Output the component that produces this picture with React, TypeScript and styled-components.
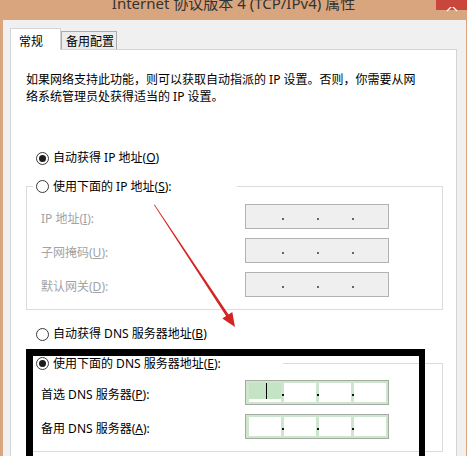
import React from "react";
import styled, { createGlobalStyle } from "styled-components";

const GlobalStyle = createGlobalStyle`
  html, body {
    margin: 0;
    padding: 0;
    background: #d9a57e;
    overflow: hidden;
  }
  body {
    font-family: "Segoe UI", "Noto Sans", "Noto Sans CJK SC", sans-serif;
  }
`;

const Window = styled.div`
  position: relative;
  width: 467px;
  height: 456px;
  background: #d9a57e;
  display: flex;
  flex-direction: column;
  overflow: hidden;
`;

const TitleBar = styled.div`
  height: 20px;
  flex: none;
  display: grid;
  grid-template-columns: 1fr auto 1fr;
  align-items: start;
  overflow: hidden;
`;

const Title = styled.div`
  grid-column: 2;
  font-size: 15px;
  line-height: 20px;
  margin-top: -7px;
  color: #333;
  white-space: nowrap;
`;

const CloseButton = styled.div`
  grid-column: 3;
  justify-self: end;
  width: 31px;
  height: 10px;
  background: #c9463d;
`;

const Body = styled.div`
  flex: 1;
  min-height: 0;
  margin: 0 1px 0 3px;
  padding: 8px 9px 0 7px;
  background: #f0f0f0;
  display: flex;
  flex-direction: column;
`;

const Tabs = styled.div`
  display: flex;
  align-items: flex-end;
  height: 21px;
  flex: none;
  position: relative;
  z-index: 1;
`;

const Tab = styled.div<{ $active?: boolean }>`
  box-sizing: border-box;
  font-size: 12px;
  line-height: 16px;
  color: #000;
  white-space: nowrap;
  border: 1px solid ${(p) => (p.$active ? "#d4d4d4" : "#acacac")};
  border-bottom: none;
  background: ${(p) => (p.$active ? "#fff" : "#ececec")};
  height: ${(p) => (p.$active ? "22px" : "18px")};
  margin-bottom: ${(p) => (p.$active ? "-1px" : "0")};
  padding: ${(p) => (p.$active ? "5px 0 0 8px" : "2px 0 0 4px")};
  width: ${(p) => (p.$active ? "51px" : "56px")};
`;

const Panel = styled.div`
  flex: 1;
  background: #fff;
  border: 1px solid #d4d4d4;
  border-bottom: none;
  padding: 21px 13px 0 15px;
  font-size: 12px;
  color: #000;
`;

const Intro = styled.p`
  margin: 0;
  line-height: 17px;
  white-space: nowrap;
`;

const RadioRow = styled.label<{ $mt: number }>`
  display: flex;
  align-items: center;
  gap: 4px;
  height: 18px;
  margin: ${(p) => p.$mt}px 0 0 10px;
  line-height: 18px;
  white-space: nowrap;
`;

const RadioCircle = styled.span<{ $checked?: boolean }>`
  box-sizing: border-box;
  width: 13px;
  height: 13px;
  flex: none;
  border-radius: 50%;
  border: 1px solid #3a3a3a;
  background: #fff;
  display: flex;
  align-items: center;
  justify-content: center;

  &::after {
    content: "";
    width: 7px;
    height: 7px;
    border-radius: 50%;
    background: #1c1c1c;
    display: ${(p) => (p.$checked ? "block" : "none")};
  }
`;

const Group = styled.div<{ $mt: number }>`
  border: 1px solid #dcdcdc;
  margin-top: ${(p) => p.$mt}px;
  padding: 0 0 12px 0;
`;

const Legend = styled.label<{ $width: number }>`
  display: flex;
  align-items: center;
  gap: 4px;
  box-sizing: border-box;
  width: ${(p) => p.$width}px;
  height: 18px;
  margin: -10px 0 0 6px;
  padding-left: 3px;
  background: #fff;
  white-space: nowrap;
`;

const Fields = styled.div<{ $mt: number }>`
  display: flex;
  flex-direction: column;
  gap: 9px;
  margin-top: ${(p) => p.$mt}px;
  padding-left: 14px;
`;

const FieldRow = styled.div`
  display: flex;
  align-items: center;
  height: 25px;
`;

const FieldLabel = styled.span<{ $disabled?: boolean }>`
  width: 204px;
  flex: none;
  padding-top: 2px;
  color: ${(p) => (p.$disabled ? "#a3a3a3" : "#000")};
  white-space: nowrap;
`;

const IpBox = styled.div<{ $active?: boolean }>`
  box-sizing: border-box;
  width: 144px;
  height: 25px;
  display: flex;
  border: 1px solid ${(p) => (p.$active ? "#a3aba3" : "#b0b3b0")};
  padding: 2px 2px 2px 3px;
  background: ${(p) => (p.$active ? "#cde6cd" : "#eeefee")};
`;

const Segment = styled.div<{ $active?: boolean; $focused?: boolean }>`
  flex: 1;
  display: flex;
  align-items: flex-start;
  background: ${(p) => (p.$focused ? "#c5e3c5" : p.$active ? "#fff" : "#eeefee")};
  border-bottom: ${(p) => (p.$focused ? "3px solid #fff" : "none")};
`;

const Caret = styled.span`
  width: 1px;
  height: 16px;
  margin: 0 0 0 17px;
  background: #000;
`;

const Dot = styled.span<{ $active?: boolean }>`
  width: 3px;
  flex: none;
  display: flex;
  align-items: flex-end;
  justify-content: center;
  padding-bottom: 6px;

  &::after {
    content: "";
    width: 2px;
    height: 2px;
    background: ${(p) => (p.$active ? "#111" : "#666")};
  }
`;

const Highlight = styled.div`
  position: absolute;
  left: 26px;
  top: 349px;
  width: 399px;
  height: 130px;
  box-sizing: border-box;
  border-style: solid;
  border-color: #000;
  border-width: 7px 6px 0 7px;
  pointer-events: none;
`;

const Overlay = styled.svg`
  position: absolute;
  left: 0;
  top: 0;
  pointer-events: none;
`;

type IpProps = { active?: boolean; focused?: boolean };

const IpField: React.FC<IpProps> = ({ active, focused }) => (
  <IpBox $active={active}>
    {[0, 1, 2, 3].map((i) => (
      <React.Fragment key={i}>
        {i > 0 && <Dot $active={active} />}
        <Segment $active={active} $focused={focused && i === 0}>
          {focused && i === 0 && <Caret />}
        </Segment>
      </React.Fragment>
    ))}
  </IpBox>
);

export default function App() {
  return (
    <>
      <GlobalStyle />
      <Window>
        <TitleBar>
          <Title>Internet 协议版本 4 (TCP/IPv4) 属性</Title>
          <CloseButton>
            <svg width="31" height="10" viewBox="0 0 31 10">
              <path d="M11 -6 L21 4 M21 -6 L11 4" stroke="#fff" strokeWidth="1.3" fill="none" />
            </svg>
          </CloseButton>
        </TitleBar>
        <Body>
          <Tabs>
            <Tab $active>常规</Tab>
            <Tab>备用配置</Tab>
          </Tabs>
          <Panel>
            <Intro>
              如果网络支持此功能，则可以获取自动指派的 IP 设置。否则，你需要从网
              <br />
              络系统管理员处获得适当的 IP 设置。
            </Intro>

            <RadioRow $mt={44}>
              <RadioCircle $checked />
              <span>
                自动获得 IP 地址(<u>O</u>)
              </span>
            </RadioRow>

            <Group $mt={19}>
              <Legend $width={204}>
                <RadioCircle />
                <span>
                  使用下面的 IP 地址(<u>S</u>):
                </span>
              </Legend>
              <Fields $mt={9}>
                <FieldRow>
                  <FieldLabel $disabled>
                    IP 地址(<u>I</u>):
                  </FieldLabel>
                  <IpField />
                </FieldRow>
                <FieldRow>
                  <FieldLabel $disabled>
                    子网掩码(<u>U</u>):
                  </FieldLabel>
                  <IpField />
                </FieldRow>
                <FieldRow>
                  <FieldLabel $disabled>
                    默认网关(<u>D</u>):
                  </FieldLabel>
                  <IpField />
                </FieldRow>
              </Fields>
            </Group>

            <RadioRow $mt={15}>
              <RadioCircle />
              <span>
                自动获得 DNS 服务器地址(<u>B</u>)
              </span>
            </RadioRow>

            <Group $mt={20}>
              <Legend $width={250}>
                <RadioCircle $checked />
                <span>
                  使用下面的 DNS 服务器地址(<u>E</u>):
                </span>
              </Legend>
              <Fields $mt={8}>
                <FieldRow>
                  <FieldLabel>
                    首选 DNS 服务器(<u>P</u>):
                  </FieldLabel>
                  <IpField active focused />
                </FieldRow>
                <FieldRow>
                  <FieldLabel>
                    备用 DNS 服务器(<u>A</u>):
                  </FieldLabel>
                  <IpField active />
                </FieldRow>
              </Fields>
            </Group>
          </Panel>
        </Body>

        <Highlight />
        <Overlay width="467" height="456" viewBox="0 0 467 456">
          <polygon
            points="154,205 154.6,204.6 228.55,314.5 232.3,312 235,327 222.3,318.6 226.05,316.1"
            fill="#d52424"
          />
        </Overlay>
      </Window>
    </>
  );
}
